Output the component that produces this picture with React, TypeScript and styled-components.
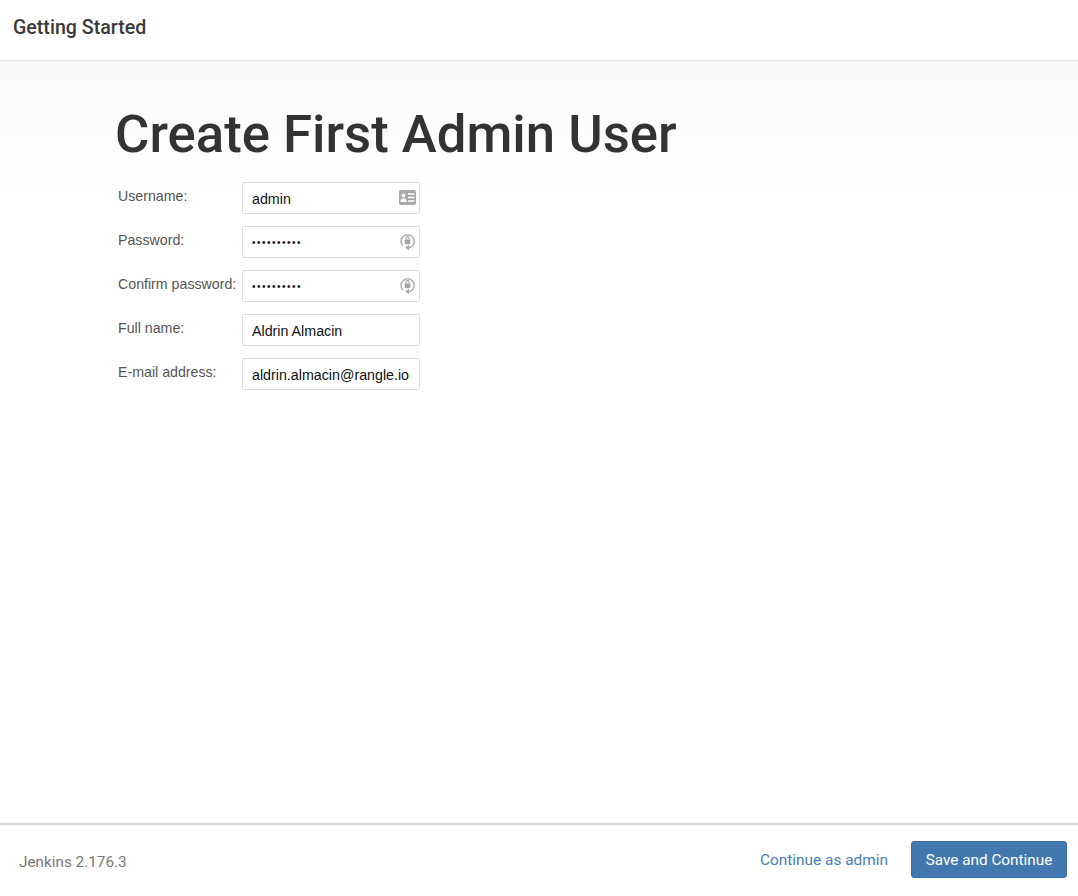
import React from "react";
import styled, { createGlobalStyle } from "styled-components";

const Global = createGlobalStyle`
  html, body { margin: 0; padding: 0; background: #fff; }
  body { font-family: "Liberation Sans", Arial, sans-serif; color: #333; }
  * { box-sizing: border-box; }
`;

const Page = styled.div`
  width: 1078px;
  height: 896px;
  display: flex;
  flex-direction: column;
  overflow: hidden;
`;

const Header = styled.header`
  height: 61px;
  flex: none;
  border-bottom: 1px solid #e5e5e5;
  padding: 16px 13px 0;
`;

const HeaderTitle = styled.h1`
  margin: 0;
  font: 500 19.6px/24px Roboto, sans-serif;
  color: #3a3a3a;
`;

const Main = styled.main`
  flex: 1;
  padding: 39px 0 0 115px;
  background: linear-gradient(to bottom, #f9f9f9 0, #fcfcfc 55px, #fefefe 110px, #ffffff 150px);
`;

const Title = styled.h2`
  margin: 0 0 14px;
  font: 500 52.7px/68px Roboto, sans-serif;
  color: #333;
`;

const Form = styled.form`
  display: grid;
  grid-template-columns: 124px 178px;
  row-gap: 12px;
  padding-left: 3px;
`;

const Label = styled.label`
  font-size: 14.2px;
  line-height: 16px;
  color: #555;
  padding-top: 6px;
`;

const Field = styled.div`
  position: relative;
  height: 32px;
`;

const Input = styled.input<{ $secret?: boolean }>`
  width: 100%;
  height: 100%;
  padding: 1px 0 0 9px;
  border: 1px solid #dcdcdc;
  border-radius: 2px;
  background: #fff;
  outline: none;
  font: ${(p) => (p.$secret ? "10px" : "14.25px")} "Liberation Sans", Arial, sans-serif;
  letter-spacing: ${(p) => (p.$secret ? "1.5px" : "0")};
  color: #111;
`;

const FieldIcon = styled.svg`
  position: absolute;
  right: 3px;
  top: 6px;
  width: 19px;
  height: 19px;
`;

const Footer = styled.footer`
  height: 73px;
  flex: none;
  border-top: 2px solid #d4d4d4;
  display: flex;
  align-items: flex-start;
  padding: 16px 11px 0 19px;
`;

const Version = styled.span`
  font: 400 15.3px/20px Roboto, sans-serif;
  color: #777;
  margin-top: 11px;
`;

const Actions = styled.div`
  margin-left: auto;
  display: flex;
  align-items: center;
  gap: 23px;
`;

const SkipLink = styled.a`
  font: 400 15.4px/20px Roboto, sans-serif;
  color: #4a7db5;
  text-decoration: none;
`;

const SaveButton = styled.button`
  width: 156px;
  height: 37px;
  border: 1px solid #3c6fa6;
  border-radius: 3px;
  background: #4277b0;
  color: #fff;
  font: 400 15.3px/20px Roboto, sans-serif;
  padding: 0;
`;

const CardIcon = () => (
  <FieldIcon viewBox="0 0 19 19">
    <rect x="1" y="2" width="17" height="15" rx="2" fill="#a9a9a9" />
    <circle cx="5.5" cy="7.4" r="2" fill="#fff" />
    <path d="M2.5 14c0-2.8 1.2-3.8 3-3.8s3 1 3 3.8z" fill="#fff" />
    <path d="M10 6h6.5M10 9.5h6.5M10 13h6.5" stroke="#fff" strokeWidth="1.5" />
  </FieldIcon>
);

const LockIcon = () => (
  <FieldIcon viewBox="0 0 19 19">
    <path d="M5.1 14.2A6.6 6.6 0 1 1 14.2 14.2A6.4 6.4 0 0 1 10.6 15.7" fill="none" stroke="#b4b4b4" strokeWidth="1.6" />
    <path d="M11 12.8v5.6L7.2 15.6z" fill="#a8a8a8" />
    <rect x="6.7" y="7.4" width="5.6" height="4.8" rx="0.8" fill="#a4a4a4" />
    <path d="M7.9 7.6V6.2a1.6 1.6 0 0 1 3.2 0v1.4" fill="none" stroke="#a4a4a4" strokeWidth="1.1" />
  </FieldIcon>
);

type Row = { label: string; value: string; type: string; icon?: React.ReactNode };

const rows: Row[] = [
  { label: "Username:", value: "admin", type: "text", icon: <CardIcon /> },
  { label: "Password:", value: "password12", type: "password", icon: <LockIcon /> },
  { label: "Confirm password:", value: "password12", type: "password", icon: <LockIcon /> },
  { label: "Full name:", value: "Aldrin Almacin", type: "text" },
  { label: "E-mail address:", value: "aldrin.almacin@rangle.io", type: "text" },
];

export default function App() {
  return (
    <Page>
      <Global />
      <Header>
        <HeaderTitle>Getting Started</HeaderTitle>
      </Header>
      <Main>
        <Title>Create First Admin User</Title>
        <Form>
          {rows.map((r) => (
            <React.Fragment key={r.label}>
              <Label>{r.label}</Label>
              <Field>
                <Input type={r.type} $secret={r.type === "password"} defaultValue={r.value} readOnly />
                {r.icon}
              </Field>
            </React.Fragment>
          ))}
        </Form>
      </Main>
      <Footer>
        <Version>Jenkins 2.176.3</Version>
        <Actions>
          <SkipLink href="#">Continue as admin</SkipLink>
          <SaveButton type="button">Save and Continue</SaveButton>
        </Actions>
      </Footer>
    </Page>
  );
}
